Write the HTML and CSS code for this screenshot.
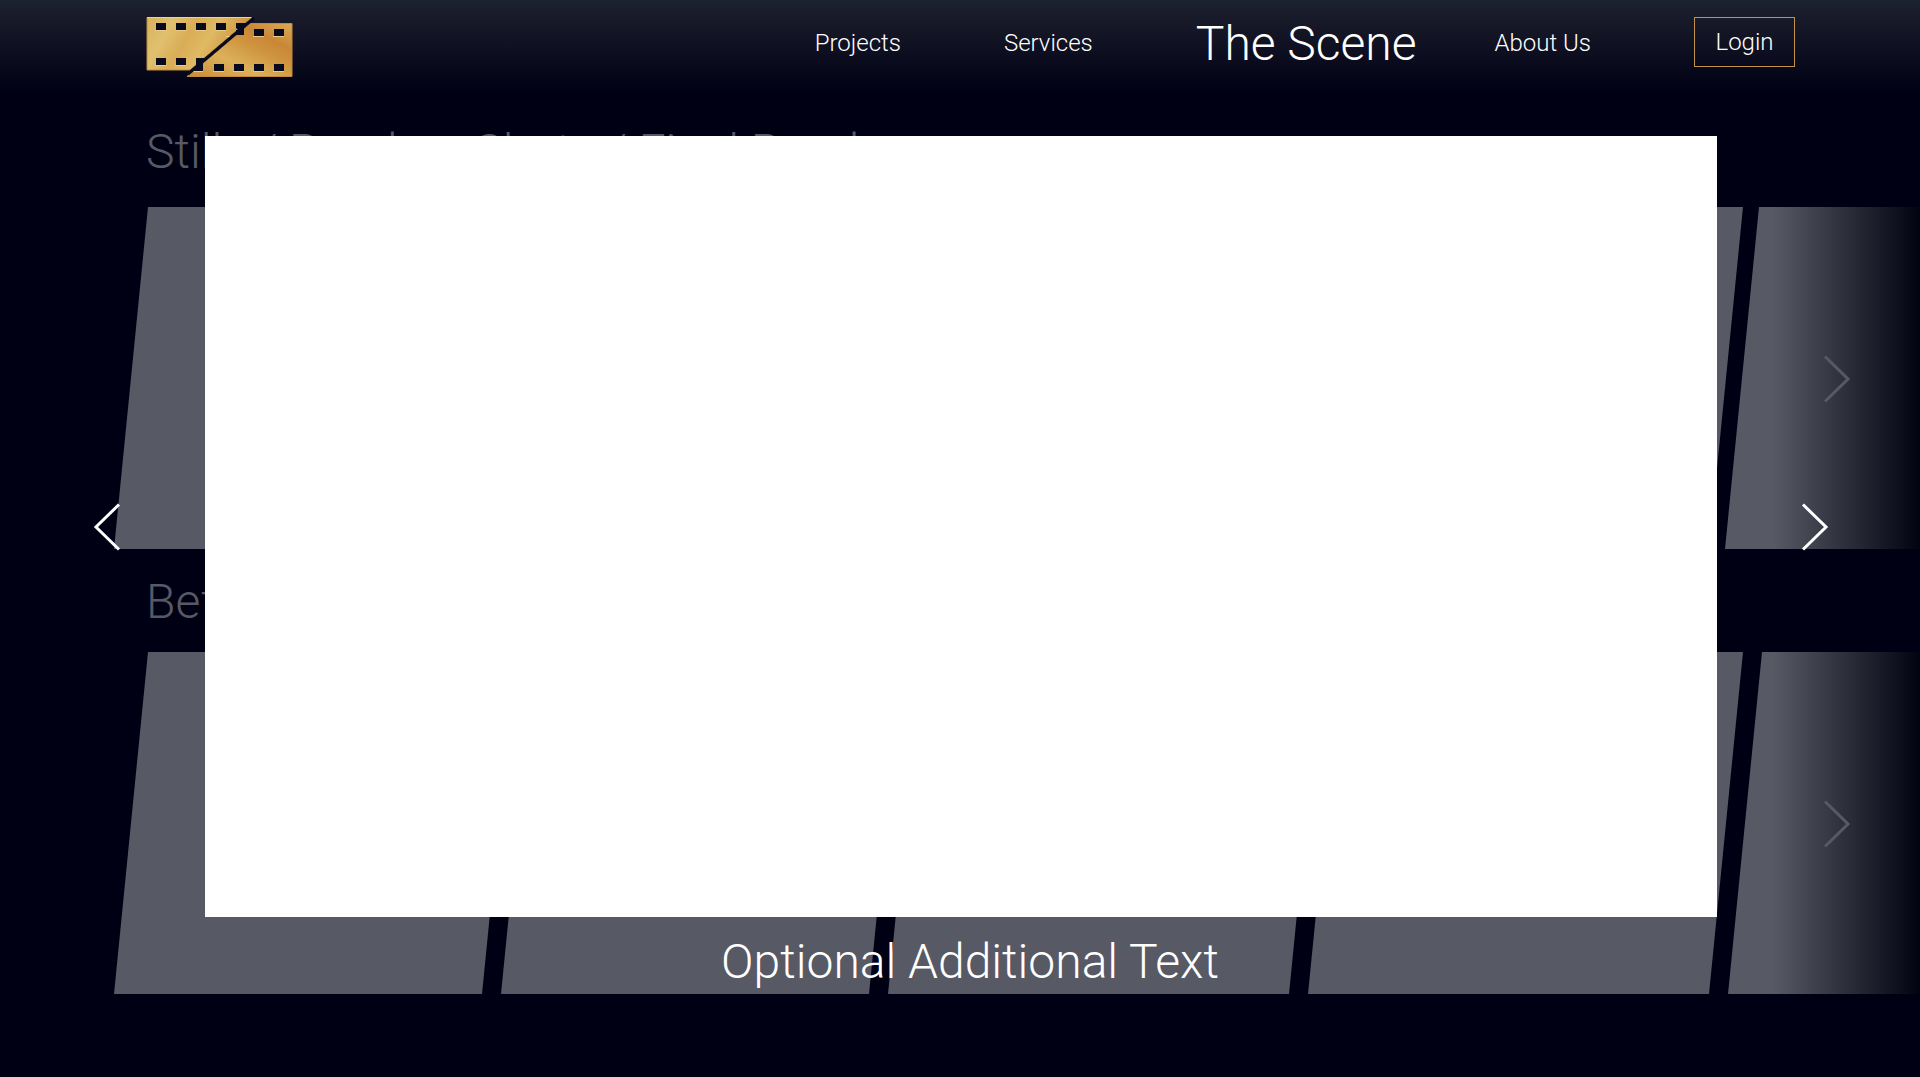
FILE: index.html
```html
<!DOCTYPE html>
<html lang="en">
<head>
<meta charset="utf-8">
<meta name="viewport" content="width=device-width, initial-scale=1">
<title>The Scene</title>
<link rel="stylesheet" href="styles.css">
</head>
<body>
<header class="site-header">
  <a class="logo" href="#" aria-label="Home">
    <svg width="148" height="62" viewBox="0 0 148 62" aria-hidden="true">
      <defs>
        <linearGradient id="gold-left" x1="0" y1="0" x2="1" y2="0.3">
          <stop offset="0" stop-color="#d9b25c"/>
          <stop offset="0.25" stop-color="#e0c06f"/>
          <stop offset="0.45" stop-color="#d9ad56"/>
          <stop offset="0.65" stop-color="#dfb964"/>
          <stop offset="1" stop-color="#c98c35"/>
        </linearGradient>
        <linearGradient id="gold-right" x1="0" y1="1" x2="1" y2="0">
          <stop offset="0" stop-color="#c78b35"/>
          <stop offset="0.35" stop-color="#dcb15a"/>
          <stop offset="0.6" stop-color="#cf9440"/>
          <stop offset="0.75" stop-color="#c98736"/>
          <stop offset="1" stop-color="#d9ab58"/>
        </linearGradient>
      </defs>
      <path d="M1 1.500H106L44 54H1Z" fill="url(#gold-left)" stroke="#c18a3c"/>
      <path d="M1 1.500H105" stroke="#edd193"/>
      <path d="M104 7.500H146V60.500H41Z" fill="url(#gold-right)" stroke="#c18a3c"/>
      <path d="M9 14.500h11M29 14.500h11M49 14.500h11M69 14.500h11M9 49.500h11M29 49.500h11M80 20.500h8M107 20.500h11M127 20.500h11M47 55.500h10M67 55.500h11M87 55.500h11M107 55.500h11M127 55.500h11" stroke="#eccb86"/>
      <path d="M10 7h10v7H10zM30 7h10v7H30zM50 7h10v7H50zM70 7h10v7H70zM90 7h10v4l-2 1v7h-8v-5h2l-2-2zM10 42h10v7H10zM30 42h10v7H30zM50 42h9l-3 4 1 1v8H47l4-5h-1zM108 13h10v7h-10zM128 13h10v7h-10zM68 48h10v7H68zM88 48h10v7H88zM108 48h10v7h-10zM128 48h10v7h-10z" fill="#080b1d"/>
      <path d="M108 2L42 58" stroke="#080b1d" stroke-width="3"/>
    </svg>
  </a>
  <nav class="nav" aria-label="Main">
    <a href="#">Projects</a>
    <a href="#">Services</a>
    <a class="current" href="#">The Scene</a>
    <a class="about" href="#">About Us</a>
    <button class="login" type="button">Login</button>
  </nav>
</header>

<main>
  <section class="reel reel-stills">
    <h2>Stills / Renders Shots / Final Render</h2>
    <div class="track">
      <div class="card"></div><div class="card"></div><div class="card wide"></div><div class="card wide"></div><div class="card wide last"></div>
      <button class="next" type="button" aria-label="Next stills">
        <svg width="28" height="50" viewBox="0 0 28 50"><path d="M2 2.500L25 25L2 47.500"/></svg>
      </button>
    </div>
  </section>
  <section class="reel reel-before">
    <h2>Before / After</h2>
    <div class="track">
      <div class="card"></div><div class="card"></div><div class="card wide"></div><div class="card wide"></div><div class="card wide last"></div>
      <button class="next" type="button" aria-label="Next before and after">
        <svg width="28" height="50" viewBox="0 0 28 50"><path d="M2 2.500L25 25L2 47.500"/></svg>
      </button>
    </div>
  </section>
</main>

<div class="lightbox" role="dialog" aria-label="Viewer">
  <button class="arrow arrow-prev" type="button" aria-label="Previous">
    <svg width="28" height="50" viewBox="0 0 28 50"><path d="M26 2.500L3 25L26 47.500"/></svg>
  </button>
  <figure>
    <div class="stage"></div>
    <figcaption>Optional Additional Text</figcaption>
  </figure>
  <button class="arrow arrow-next" type="button" aria-label="Next">
    <svg width="28" height="50" viewBox="0 0 28 50"><path d="M2 2.500L25 25L2 47.500"/></svg>
  </button>
</div>
</body>
</html>
```

FILE: styles.css
```css
* { box-sizing: border-box; }

body {
  margin: 0;
  position: relative;
  min-height: 100vh;
  overflow-x: hidden;
  background: #000014;
  color: #fff;
  font-family: Roboto, "Liberation Sans", sans-serif;
  font-weight: 300;
}

button {
  margin: 0;
  padding: 0;
  border: 0;
  background: none;
  color: inherit;
  font: inherit;
  cursor: pointer;
}

svg { display: block; fill: none; }

.site-header {
  display: flex;
  justify-content: space-between;
  align-items: flex-start;
  height: 94px;
  padding: 0 125px 0 146px;
  background: linear-gradient(#1c222f, #181a29 20%, #000014);
}

.logo { padding-top: 16px; }

.nav {
  display: flex;
  align-items: center;
  gap: 103px;
  height: 84px;
  font-size: 24px;
}

.nav a {
  padding-top: 2px;
  color: inherit;
  text-decoration: none;
  white-space: nowrap;
}

.nav .current { font-size: 48px; }
.nav .about { margin-left: -25px; }

.login {
  width: 101px;
  height: 50px;
  border: 1px solid #c1924a;
}

.reel-stills { padding-top: 30px; }
.reel-before { padding-top: 25px; }

.reel h2 {
  margin: 0 146px 27px;
  color: #575965;
  font-size: 48px;
  font-weight: 300;
  line-height: 56px;
}

.reel-before h2 { margin-bottom: 22px; }

.track {
  position: relative;
  display: flex;
  height: 342px;
  padding-left: 114px;
  overflow: hidden;
}

.track::after {
  content: "";
  position: absolute;
  inset: 0 0 0 auto;
  width: 147px;
  background: linear-gradient(to right, #02031000, #020310);
}

.card {
  flex: none;
  width: 402px;
  background: #575965;
  clip-path: polygon(34px 0, 100% 0, calc(100% - 34px) 100%, 0 100%);
}

.card.wide { width: 435px; }
.card + .card { margin-left: -15px; }
.reel-stills .card.last { margin-left: -18px; }

.next {
  position: absolute;
  z-index: 1;
  top: 50%;
  right: 69px;
  margin-top: -24px;
}

.next path { stroke: #575965; stroke-width: 3; }

/* Viewer laid over the reels */
.lightbox {
  position: absolute;
  z-index: 2;
  top: 136px;
  left: 0;
  right: 0;
  display: grid;
  grid-template-columns: 205px 1fr 203px;
}

.lightbox figure { margin: 0; }

.stage { aspect-ratio: 1512 / 781; background: #fff; }

figcaption {
  padding: 17px 0 0 18px;
  font-size: 48px;
  line-height: 56px;
  text-align: center;
}

.arrow { display: flex; align-items: center; padding-bottom: 73px; }
.arrow-prev { padding-left: 93px; }
.arrow-next { padding-left: 84px; }
.arrow path { stroke: #fff; stroke-width: 3; }
```
